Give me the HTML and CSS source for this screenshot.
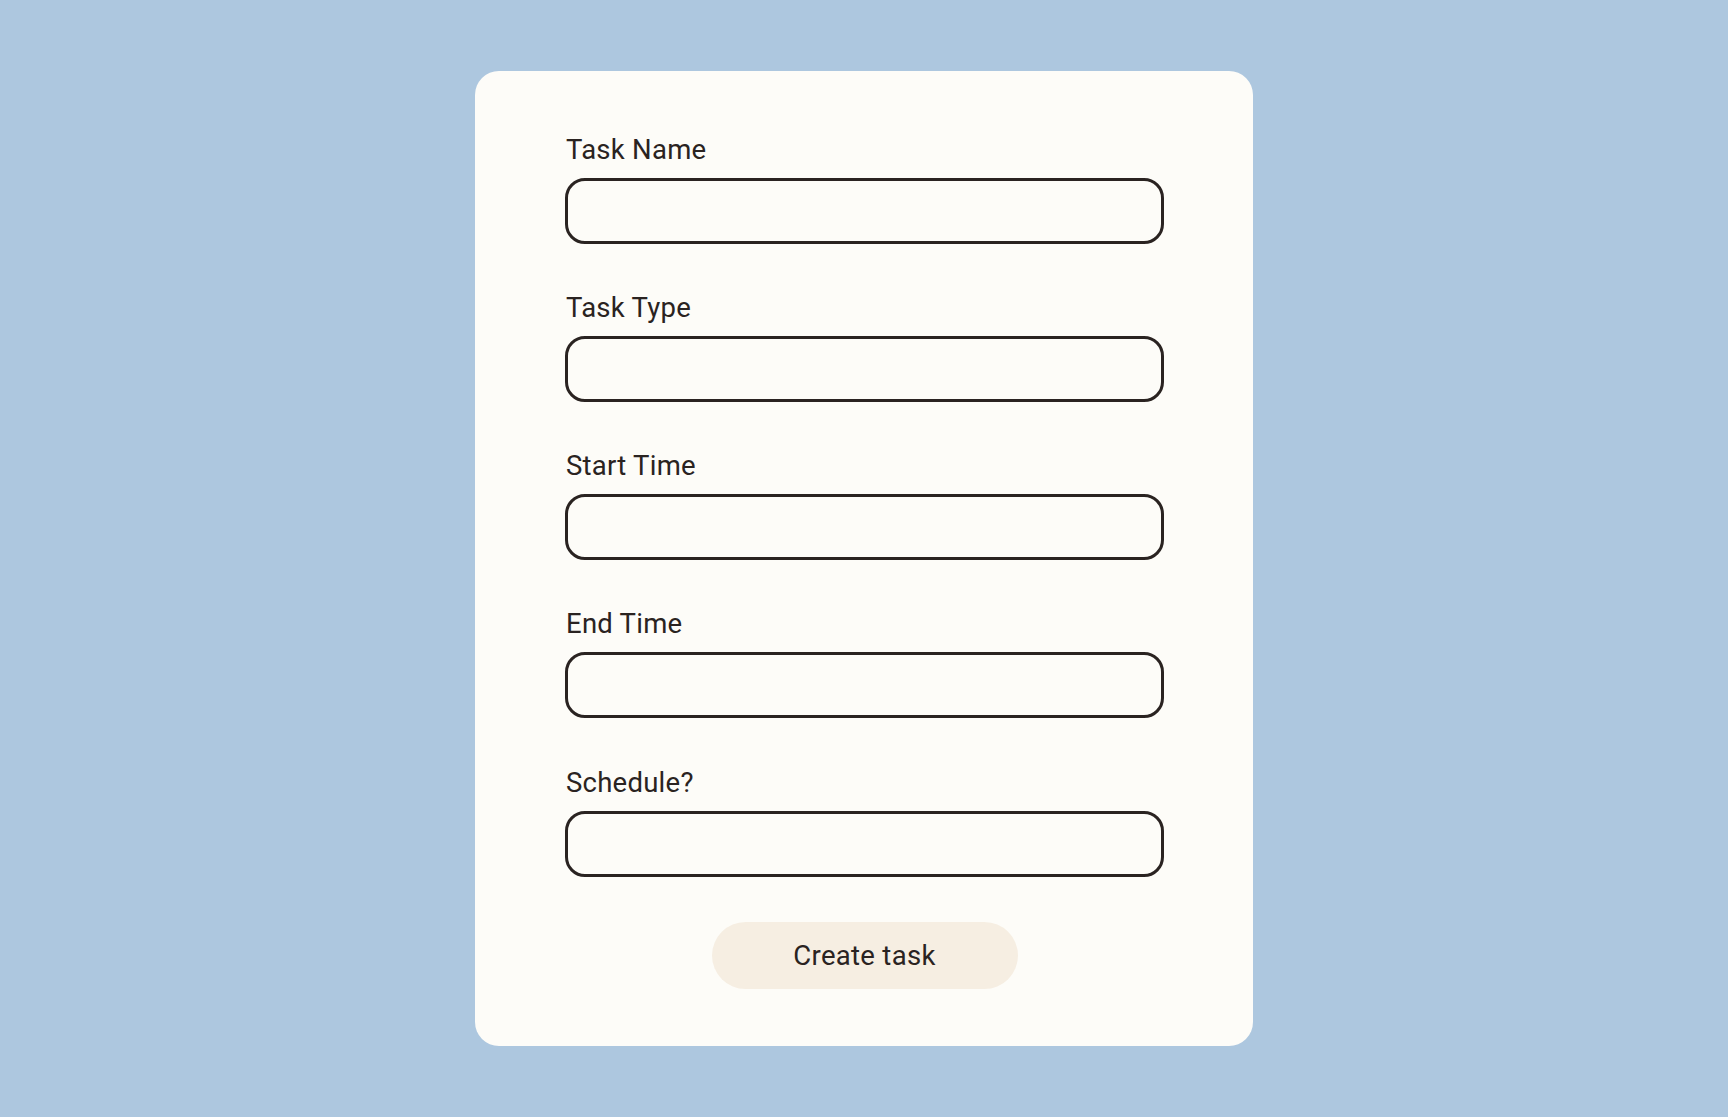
FILE: index.html
```html
<!DOCTYPE html>
<html lang="en">
<head>
<meta charset="utf-8">
<title>Create task</title>
<link rel="stylesheet" href="styles.css">
</head>
<body>
<main class="page">
  <form class="card">
    <div class="field">
      <label class="label" for="name">Task Name</label>
      <input class="input" id="name" type="text">
    </div>
    <div class="field">
      <label class="label" for="type">Task Type</label>
      <input class="input" id="type" type="text">
    </div>
    <div class="field">
      <label class="label" for="start">Start Time</label>
      <input class="input" id="start" type="text">
    </div>
    <div class="field">
      <label class="label" for="end">End Time</label>
      <input class="input" id="end" type="text">
    </div>
    <div class="field">
      <label class="label" for="schedule">Schedule?</label>
      <input class="input" id="schedule" type="text">
    </div>
    <button class="button" type="button">Create task</button>
  </form>
</main>
</body>
</html>
```

FILE: styles.css
```css
* {
  box-sizing: border-box;
}

html, body {
  margin: 0;
  padding: 0;
}

body {
  background: #adc7df;
  font-family: Roboto, "Liberation Sans", sans-serif;
  color: #2a2321;
}

.page {
  min-height: 100vh;
  display: flex;
  align-items: center;
  justify-content: center;
}

.card {
  width: 778px;
  background: #fdfcf8;
  border-radius: 24px;
  padding: 62px 89px 57px 90px;
  display: flex;
  flex-direction: column;
  gap: 47.2px;
}

.field {
  display: flex;
  flex-direction: column;
  gap: 12px;
}

.label {
  font-size: 27.5px;
  line-height: 33px;
  font-weight: 400;
  letter-spacing: 0.25px;
  padding-left: 1px;
}

.input {
  display: block;
  width: 100%;
  height: 66px;
  border: 3px solid #2a2321;
  border-radius: 20px;
  background: #fdfcf8;
  font: inherit;
  font-size: 24px;
  padding: 0 20px;
  outline: none;
}

.button {
  align-self: center;
  margin-top: -1.8px;
  width: 306px;
  height: 67px;
  border: none;
  border-radius: 34px;
  background: #f6eee2;
  color: #2a2321;
  font-family: inherit;
  font-size: 27.5px;
  letter-spacing: 0.3px;
  cursor: pointer;
}
```
